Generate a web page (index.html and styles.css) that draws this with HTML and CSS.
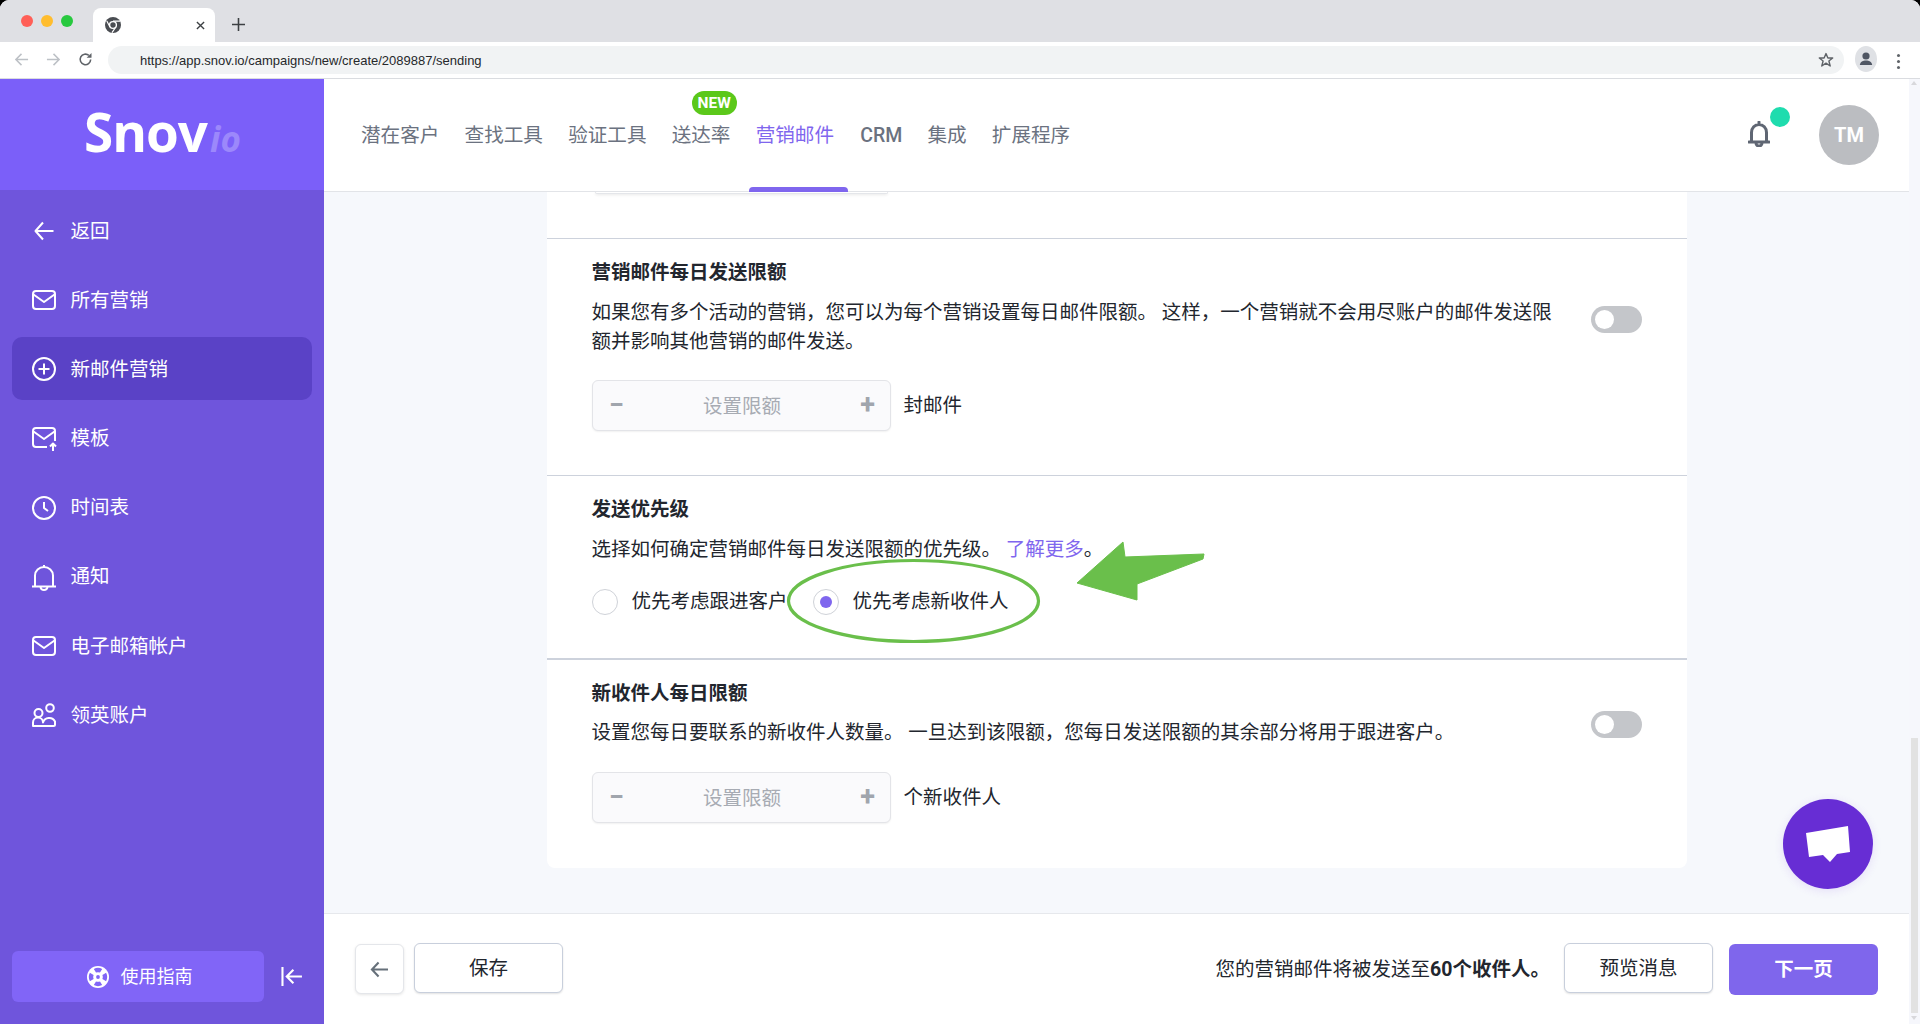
FILE: index.html
```html
<!DOCTYPE html>
<html lang="zh-CN">
<head>
<meta charset="utf-8">
<title>Snov.io</title>
<link rel="stylesheet" href="styles.css">
</head>
<body>
<div class="browser">
  <div class="tabstrip">
    <div class="lights"><i class="light red"></i><i class="light amber"></i><i class="light green"></i></div>
    <div class="tab">
      <svg class="favicon" viewBox="0 0 16 16"><circle cx="8" cy="8" r="8" fill="#4a4d52"/><circle cx="8" cy="8" r="3.4" fill="#4a4d52" stroke="#fff" stroke-width="1.4"/><path d="M8 4.2H15M5 10L1.8 4M10.8 10L7 15.6" stroke="#fff" stroke-width="1.2"/></svg>
      <svg class="tabclose" viewBox="0 0 10 10"><path d="M1 1L9 9M9 1L1 9" stroke="#3c4043" stroke-width="1.5"/></svg>
    </div>
    <svg class="newtab" viewBox="0 0 14 14"><path d="M7 0V14M0 7H14" stroke="#3c4043" stroke-width="1.7"/></svg>
  </div>
  <div class="toolbar">
    <svg class="tool" viewBox="0 0 16 16"><path d="M15 8H2M8 2L2 8L8 14" fill="none" stroke="#bdc1c6" stroke-width="1.6"/></svg>
    <svg class="tool" viewBox="0 0 16 16"><path d="M1 8H14M8 2L14 8L8 14" fill="none" stroke="#bdc1c6" stroke-width="1.6"/></svg>
    <svg class="tool" viewBox="0 0 16 16"><path d="M13.5 8A5.6 5.6 0 1 1 11.6 3.7" fill="none" stroke="#5f6368" stroke-width="1.7"/><path d="M14.4 1V6.2H9.2Z" fill="#5f6368"/></svg>
    <div class="omnibox">
      <span class="url">https://app.snov.io/campaigns/new/create/2089887/sending</span>
      <svg class="star" viewBox="0 0 16 16"><path d="M8 1.6L9.9 6H14.7L10.9 9L12.2 14L8 11.2L3.8 14L5.1 9L1.3 6H6.1Z" fill="none" stroke="#5f6368" stroke-width="1.4" stroke-linejoin="round"/></svg>
    </div>
    <div class="profile"><svg viewBox="0 0 22 22"><circle cx="11" cy="8" r="3.6" fill="#4f5663"/><path d="M4.8 17C5.4 13.6 8 12.6 11 12.6S16.6 13.6 17.2 17Z" fill="#4f5663"/></svg></div>
    <div class="dots"><i></i><i></i><i></i></div>
  </div>
</div>

<div class="app">
  <aside class="sidebar">
    <div class="logo"><span class="logo-main">Snov</span><span class="logo-io">io</span></div>
    <nav class="sidenav">
      <a class="side-item"><svg class="side-icon" viewBox="0 0 24 24"><path d="M11 3.500L3.500 12L11 20.500M4 12H21.500"/></svg>返回</a>
      <a class="side-item"><svg class="side-icon" viewBox="0 0 24 24"><rect x="1" y="3" width="22" height="18" rx="3"/><path d="M1.500 6.500L12 14L22.500 6.500"/></svg>所有营销</a>
      <a class="side-item active"><svg class="side-icon" viewBox="0 0 24 24"><circle cx="12" cy="12" r="11"/><path d="M12 6.500V17.500M6.500 12H17.500"/></svg>新邮件营销</a>
      <a class="side-item"><svg class="side-icon" viewBox="0 0 24 24"><path d="M15 20H4a3 3 0 0 1-3-3V4a3 3 0 0 1 3-3H20a3 3 0 0 1 3 3V14M1.500 4.500L12 12L22.500 4.500"/><path d="M21 24V17M18 19.500L21 16.500L24 19.500"/></svg>模板</a>
      <a class="side-item"><svg class="side-icon" viewBox="0 0 24 24"><circle cx="12" cy="12" r="11"/><path d="M12 6V12L16 15"/></svg>时间表</a>
      <a class="side-item"><svg class="side-icon" viewBox="0 0 24 24"><path d="M3 21V10.500A9 8.500 0 0 1 21 10.500V21M0 21.500H24M8.500 22A3.500 3 0 0 0 15.500 22M12 0V2"/></svg>通知</a>
      <a class="side-item"><svg class="side-icon" viewBox="0 0 24 24"><rect x="1" y="3" width="22" height="18" rx="3"/><path d="M1.500 6.500L12 14L22.500 6.500"/></svg>电子邮箱帐户</a>
      <a class="side-item"><svg class="side-icon" viewBox="0 0 24 24"><circle cx="18" cy="5" r="3.800"/><circle cx="6.500" cy="10" r="4"/><path d="M1 23V19.500A5 5 0 0 1 11 19.500A6.500 6.500 0 0 1 23 18.500V21.500A1.500 1.500 0 0 1 21.500 23Z"/></svg>领英账户</a>
    </nav>
    <div class="side-foot">
      <a class="guide"><svg class="guide-icon" viewBox="0 0 22 22"><circle cx="11" cy="11" r="11" fill="#fff"/><path d="M6.800 2.900A9 9 0 0 1 15.200 2.900L13 6.600A4.800 4.800 0 0 0 9 6.600ZM6.800 19.100A9 9 0 0 0 15.200 19.100L13 15.400A4.800 4.800 0 0 1 9 15.400ZM2.900 6.800A9 9 0 0 0 2.900 15.200L6.600 13A4.800 4.800 0 0 1 6.600 9ZM19.100 6.800A9 9 0 0 1 19.100 15.200L15.400 13A4.800 4.800 0 0 0 15.400 9Z" fill="#8165f7"/><circle cx="11" cy="11" r="1.900" fill="#8165f7"/></svg>使用指南</a>
      <svg class="collapse" viewBox="0 0 22 20"><path d="M1.500 0V20M22 10H6M13 3L6 10L13 17" fill="none" stroke="#fff" stroke-width="2.200"/></svg>
    </div>
  </aside>

  <div class="main">
    <header class="topbar">
      <nav class="topnav">
        <a>潜在客户</a>
        <a>查找工具</a>
        <a>验证工具</a>
        <a class="has-badge">送达率<span class="badge">NEW</span></a>
        <a class="current">营销邮件</a>
        <a class="latin">CRM</a>
        <a>集成</a>
        <a>扩展程序</a>
      </nav>
      <div class="top-right">
        <div class="bell"><svg viewBox="0 0 22 26"><path d="M3.500 20.500V11.500A7.500 8 0 0 1 18.500 11.500V20.500M1 21H21M8 22A3 3 0 0 0 14 22M11 1V3" fill="none" stroke="#5f6673" stroke-width="3" stroke-linecap="round"/></svg><i class="bell-dot"></i></div>
        <div class="avatar">TM</div>
      </div>
    </header>

    <div class="scroll">
      <div class="card">
        <section class="sec sec-top"><div class="peek"></div></section>

        <section class="sec sec-first">
          <div class="row">
            <div class="row-text">
              <h3>营销邮件每日发送限额</h3>
              <p>如果您有多个活动的营销，您可以为每个营销设置每日邮件限额。 这样，一个营销就不会用尽账户的邮件发送限额并影响其他营销的邮件发送。</p>
            </div>
            <div class="toggle"><i></i></div>
          </div>
          <div class="limit"><div class="stepper"><span class="step">−</span><span class="ph">设置限额</span><span class="step">+</span></div><span class="unit">封邮件</span></div>
        </section>

        <section class="sec sec-priority">
          <h3>发送优先级</h3>
          <p>选择如何确定营销邮件每日发送限额的优先级。 <a class="link">了解更多</a>。</p>
          <div class="radios">
            <label class="radio"><i class="dot"></i>优先考虑跟进客户</label>
            <label class="radio on"><i class="dot"></i>优先考虑新收件人</label>
          </div>
          <svg class="mark" viewBox="0 0 320 100"><ellipse cx="126.500" cy="42" rx="125" ry="40.500" fill="none" stroke="#6abf4b" stroke-width="3.200"/><path d="M336 -17L338 -2L417 -5L416 0L350 25L350 41L290 24Z" fill="#6abf4b" stroke="#6abf4b" stroke-width="1" stroke-linejoin="round"/></svg>
        </section>

        <section class="sec sec-last">
          <div class="row">
            <div class="row-text">
              <h3>新收件人每日限额</h3>
              <p>设置您每日要联系的新收件人数量。 一旦达到该限额，您每日发送限额的其余部分将用于跟进客户。</p>
            </div>
            <div class="toggle"><i></i></div>
          </div>
          <div class="limit"><div class="stepper"><span class="step">−</span><span class="ph">设置限额</span><span class="step">+</span></div><span class="unit">个新收件人</span></div>
        </section>
      </div>
      <div class="chat"><svg viewBox="0 0 44 36"><path d="M0 7L42 0L44 26L31 28L24 36L17 29L3 31Z" fill="#fff"/></svg></div>
    </div>

    <footer class="foot">
      <button class="btn btn-back"><svg viewBox="0 0 20 18"><path d="M19 9H2M9 1.500L2 9L9 16.500" fill="none" stroke="#66707a" stroke-width="2.200"/></svg></button>
      <button class="btn btn-outline">保存</button>
      <div class="summary">您的营销邮件将被发送至<b>60个收件人。</b></div>
      <button class="btn btn-outline btn-preview">预览消息</button>
      <button class="btn btn-next">下一页</button>
    </footer>
  </div>

  <div class="sbar"><span class="sbar-up"></span><span class="sbar-track"><i></i></span><span class="sbar-down"></span></div>
</div>
</body>
</html>
```
FILE: styles.css
```css
* { box-sizing: border-box; }
html, body { margin: 0; padding: 0; height: 1024px; overflow: hidden; }
body {
  width: 1920px;
  display: flex;
  flex-direction: column;
  font-family: "Roboto", "Noto Sans CJK SC", sans-serif;
  font-size: 19.5px;
  line-height: 29px;
  color: #22262e;
  background: #000;
}
a { text-decoration: none; color: inherit; }
h3, p { margin: 0; }

/* browser chrome */
.browser { height: 79px; background: #fff; border-bottom: 1px solid #dadce0; flex: none; border-radius: 9px 9px 0 0; overflow: hidden; }
.tabstrip { height: 42px; background: #dfe0e4; display: flex; align-items: flex-end; padding-left: 21px; }
.lights { display: flex; gap: 8px; align-self: flex-start; margin-top: 15px; width: 72px; }
.light { width: 12px; height: 12px; border-radius: 50%; display: block; }
.red { background: #ff5f57; }
.amber { background: #ffbd2e; }
.green { background: #28c93f; }
.tab { width: 122px; height: 34px; background: #fff; border-radius: 8px 8px 0 0; display: flex; align-items: center; justify-content: space-between; padding: 0 10px 0 12px; }
.favicon { width: 16px; height: 16px; }
.tabclose { width: 9px; height: 9px; }
.newtab { width: 13px; height: 13px; margin: 0 0 11px 17px; }
.toolbar { height: 36px; padding-top: 4px; display: flex; align-items: flex-start; }
.tool { width: 15px; height: 15px; margin: 6px 0 0 15px; flex: none; }
.tool:nth-child(2), .tool:nth-child(3) { margin-left: 17px; }
.tool:first-child { margin-left: 14px; }
.omnibox { width: 1736px; height: 28px; margin-left: 15px; background: #f1f3f4; border-radius: 14px; display: flex; align-items: center; justify-content: space-between; padding: 0 10px 0 32px; }
.url { font-family: "Liberation Sans", sans-serif; font-size: 13px; color: #26282b; line-height: 28px; padding-top: 1px; }
.star { width: 16px; height: 16px; }
.profile { width: 22px; height: 26px; border-radius: 50%; background: #dfe1e5; margin-left: 11px; display: flex; align-items: center; justify-content: center; flex: none; }
.profile svg { width: 22px; height: 22px; }
.dots { display: flex; flex-direction: column; gap: 3px; margin: 8px 0 0 20px; }
.dots i { width: 3px; height: 3px; border-radius: 50%; background: #5f6368; display: block; }

/* layout */
.app { flex: 1; display: flex; min-height: 0; }
.sidebar { width: 324px; flex: none; background: #6f55dc; display: flex; flex-direction: column; }
.logo { height: 111px; background: #7b5ff9; display: flex; align-items: baseline; justify-content: flex-start; padding: 20px 0 0 84px; font-family: "Open Sans", sans-serif; }
.logo-main { font-size: 53px; font-weight: 700; color: #fff; line-height: 66px; letter-spacing: -1px; }
.logo-io { font-size: 35px; font-weight: 700; font-style: italic; color: #9c88fb; margin-left: 3px; line-height: 40px; }

/* side nav */
.sidenav { padding-top: 9px; display: flex; flex-direction: column; gap: 6.200px; flex: 1; }
.side-item { height: 63px; margin: 0 12px; padding: 1px 0 0 20px; display: flex; align-items: center; gap: 14.500px; color: #fff; border-radius: 10px; }
.side-item.active { background: #5a42c6; }
.side-icon { width: 24px; height: 24px; flex: none; fill: none; stroke: #fff; stroke-width: 2; stroke-linejoin: round; overflow: visible; }
.side-foot { height: 73px; display: flex; align-items: flex-start; padding-left: 12px; flex: none; }
.guide { width: 252px; height: 51px; background: #8165f7; border-radius: 6px; display: flex; align-items: center; justify-content: center; gap: 12px; color: #fff; font-size: 18px; padding-left: 3px; }
.guide-icon { width: 22px; height: 22px; }
.collapse { width: 21px; height: 19px; margin: 16px 0 0 17px; }

/* topbar */
.main { flex: 1; min-width: 0; display: flex; flex-direction: column; background: #f6f8fc; }
.topbar { height: 113px; background: #fff; border-bottom: 1px solid #e2e4e8; display: flex; align-items: flex-start; justify-content: space-between; flex: none; position: relative; z-index: 2; }
.topnav { display: flex; gap: 25.200px; padding: 42px 0 0 37px; color: #6b7280; font-size: 19.600px; }
.topnav a { position: relative; height: 71px; }
.topnav .latin { font-weight: 500; font-size: 19.500px; margin-left: 1px; }
.topnav .current { color: #7f66ee; }
.topnav .current::after { content: ""; position: absolute; left: -7px; right: -14px; bottom: 0; height: 5px; background: #7f66ee; border-radius: 4px 4px 0 0; }
.badge { position: absolute; left: 20px; top: -30px; width: 45px; height: 24px; border-radius: 12px; background: #5bc81a; color: #fff; font-size: 15.500px; font-weight: 700; line-height: 24px; text-align: center; }
.top-right { display: flex; align-items: flex-start; padding: 26px 30px 0 0; }
.bell { width: 22px; height: 26px; margin-top: 16px; position: relative; margin-right: 49px; }
.bell svg { width: 22px; height: 26px; display: block; }
.bell-dot { position: absolute; left: 22px; top: -14px; width: 20px; height: 20px; border-radius: 50%; background: #1fdcae; }
.avatar { width: 60px; height: 60px; border-radius: 50%; background: #bbbdc1; color: #fff; font-weight: 700; font-size: 20px; line-height: 60px; text-align: center; }

/* content */
.scroll { flex: 1; min-height: 0; position: relative; overflow: hidden; }
.card { width: 1140px; margin: 0 auto; background: #fff; border-radius: 0 0 8px 8px; }
.sec { padding: 19px 45px 44px; border-bottom: 1px solid #cdd2dc; }
.sec-top { height: 47px; padding: 0 48px; }
.peek { width: 293px; height: 2px; background: #fff; border: 1px solid #e4e6ea; border-top: 0; border-radius: 0 0 6px 6px; box-shadow: 0 1px 3px rgba(0,0,0,.1); }
.sec-priority { position: relative; border-bottom-width: 2px; padding-bottom: 43px; }
.sec-last { border-bottom: 0; padding-bottom: 45px; }
h3 { font-weight: 700; font-size: 19.500px; line-height: 29px; color: #22262e; margin-bottom: 11px; }
.sec-last h3 { margin-bottom: 10px; }
.row { display: flex; align-items: flex-start; }
.row-text { width: 966px; flex: none; }
.toggle { width: 51px; height: 27px; border-radius: 14px; background: #c4c6ca; margin: 48px 0 0 33px; padding: 4px; flex: none; }
.sec-last .toggle { margin-top: 32px; }
.toggle i { display: block; width: 19px; height: 19px; border-radius: 50%; background: #fff; }
.limit { display: flex; align-items: center; margin-top: 25px; }
.sec-first .limit { margin-top: 24px; }
.stepper { width: 299px; height: 51px; background: #fafafc; border: 1px solid #e3e4e8; border-radius: 6px; box-shadow: 0 1px 2px rgba(0,0,0,.06); display: flex; align-items: center; justify-content: space-between; padding: 0 12px 0 14px; color: #a7abb3; }
.step { font-size: 27px; font-weight: 700; color: #a0a5ad; line-height: 51px; width: 20px; text-align: center; }
.ph { color: #a7abb3; padding-top: 2px; }
.unit { margin-left: 13px; }
.link { color: #7f66ee; }
.radios { display: flex; margin-top: 24px; height: 27px; align-items: center; }
.radio { display: flex; align-items: center; gap: 14px; margin-right: 25px; }
.dot { width: 26px; height: 26px; border-radius: 50%; border: 1px solid #cfd2d8; display: flex; align-items: center; justify-content: center; flex: none; }
.radio.on .dot::after { content: ""; width: 12px; height: 12px; border-radius: 50%; background: #7f66ee; }
.mark { position: absolute; left: 240px; top: 83px; width: 320px; height: 100px; overflow: visible; pointer-events: none; }
.chat { position: absolute; right: 36px; top: 607px; width: 90px; height: 90px; border-radius: 50%; background: #672dd4; box-shadow: 0 2px 10px rgba(103,45,212,.12); display: flex; align-items: center; justify-content: center; }
.chat svg { width: 44px; height: 36px; }

/* footer */
.foot { height: 111px; background: #fff; border-top: 1px solid #e6e8ec; display: flex; align-items: center; padding: 0 31px; flex: none; position: relative; }
.btn { font: inherit; height: 51px; border-radius: 6px; background: #fff; color: #22262e; cursor: pointer; padding: 0; display: flex; align-items: center; justify-content: center; }
.btn-back { width: 49px; height: 50px; border: 1px solid #e4e6ea; box-shadow: 0 1px 3px rgba(0,0,0,.1); margin-right: 10px; }
.btn-back svg { width: 19px; height: 17px; }
.btn-outline { width: 149px; height: 50px; margin-bottom: 2px; border: 1px solid #c8cfdc; box-shadow: 0 1px 2px rgba(0,0,0,.12); }
.summary { margin-left: auto; margin-right: 14px; }
.summary b { font-weight: 700; }
.btn-preview { margin-right: 16px; }
.btn-next { width: 149px; border: 0; background: #7f66ec; color: #fff; font-weight: 700; }

/* page scrollbar */
.sbar { width: 11px; flex: none; background: #f6f7fc; display: flex; flex-direction: column; }
.sbar-up, .sbar-down { height: 11px; flex: none; position: relative; }
.sbar-up::after { content: ""; position: absolute; left: 2px; top: 2px; border: 3.500px solid transparent; border-top: 0; border-bottom: 4px solid #d8d8dc; }
.sbar-down::after { content: ""; position: absolute; left: 2px; top: 3px; border: 3.500px solid transparent; border-bottom: 0; border-top: 4px solid #d8d8dc; }
.sbar-track { flex: 1; display: flex; align-items: flex-end; justify-content: center; }
.sbar-track i { display: block; width: 7px; height: 275px; background: #e2e2e2; }
```
